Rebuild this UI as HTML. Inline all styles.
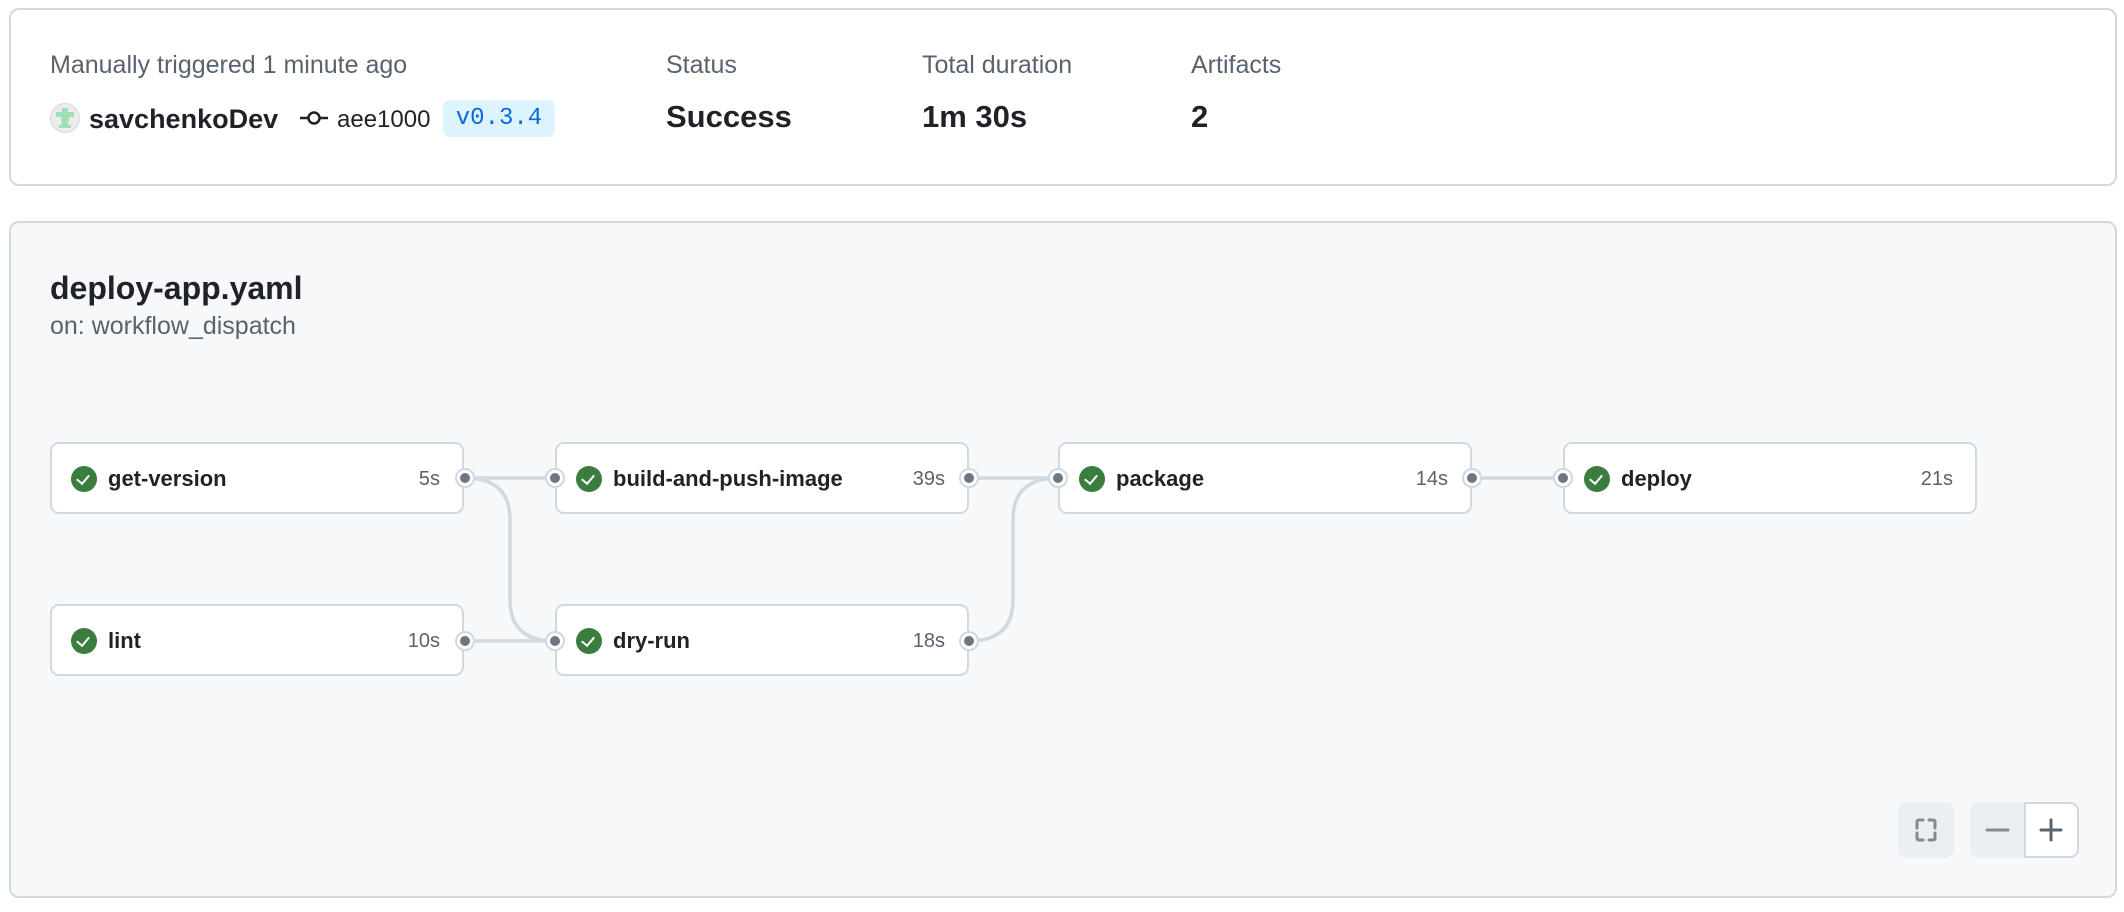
<!DOCTYPE html>
<html><head><meta charset="utf-8"><style>
*{box-sizing:border-box;margin:0;padding:0}
body{width:2124px;height:912px;background:#fff;font-family:"Liberation Sans",Arial,sans-serif;color:#1f2328;position:relative;overflow:hidden}
.abs{position:absolute}
.card1{left:9px;top:8px;width:2108px;height:178px;border:2px solid #d1d9e0;border-radius:10px;background:#fff}
.card2{left:9px;top:221px;width:2108px;height:677px;border:2px solid #d1d9e0;border-radius:10px;background:#f6f8fa}
.lbl{font-size:25px;color:#59636e;line-height:1}
.big{font-size:31px;font-weight:bold;line-height:1}
.node{position:absolute;width:414px;height:72px;background:#fff;border:2px solid #d1d9e0;border-radius:9px}
.node .ic{position:absolute;left:19px;top:22px;width:26px;height:26px;border-radius:50%;background:#3b7d3f}
.node .ic::after{content:"";position:absolute;left:8px;top:6px;width:6px;height:10px;border:solid #fff;border-width:0 2.5px 2.5px 0;transform:rotate(40deg)}
.node .nm{position:absolute;left:56px;top:22px;font-size:22px;font-weight:bold;line-height:26px;color:#1f2328}
.node .du{position:absolute;right:22px;top:24px;font-size:20px;color:#59636e;line-height:22px}
.port{position:absolute;width:20px;height:20px;border-radius:50%;background:#fff;border:2px solid #d1d9e0}
.port::after{content:"";position:absolute;left:3px;top:3px;width:10px;height:10px;border-radius:50%;background:#6e7781}
</style></head><body>
<div class="abs card1"></div>
<div class="abs lbl" style="left:50px;top:53px">Manually triggered 1 minute ago</div>
<div class="abs" style="left:50px;top:103px;width:30px;height:30px;border-radius:50%;background:#ececec;border:1px solid #d8d8d8">
<svg width="28" height="28" viewBox="0 0 28 28"><g fill="#9ee0b4"><rect x="11" y="4" width="6" height="4"/><rect x="5" y="8" width="18" height="5"/><rect x="10" y="13" width="8" height="4"/><rect x="11" y="17" width="6" height="4"/><rect x="8" y="21" width="12" height="3"/></g></svg></div>
<div class="abs" style="left:89px;top:103px;font-size:27px;font-weight:bold;line-height:32px">savchenkoDev</div>
<svg class="abs" style="left:299px;top:108px" width="30" height="20" viewBox="0 0 30 20"><line x1="1" y1="10" x2="9" y2="10" stroke="#1f2328" stroke-width="2.5"/><circle cx="15" cy="10" r="5.5" fill="none" stroke="#1f2328" stroke-width="2.5"/><line x1="21" y1="10" x2="29" y2="10" stroke="#1f2328" stroke-width="2.5"/></svg>
<div class="abs" style="left:337px;top:106px;font-size:24px;line-height:28px">aee1000</div>
<div class="abs" style="left:443px;top:100px;width:112px;height:37px;border-radius:7px;background:#ddf4ff;color:#0969da;font-family:'Liberation Mono',monospace;font-size:24px;line-height:37px;text-align:center">v0.3.4</div>
<div class="abs lbl" style="left:666px;top:53px">Status</div>
<div class="abs big" style="left:666px;top:101px">Success</div>
<div class="abs lbl" style="left:922px;top:53px">Total duration</div>
<div class="abs big" style="left:922px;top:101px">1m 30s</div>
<div class="abs lbl" style="left:1191px;top:53px">Artifacts</div>
<div class="abs big" style="left:1191px;top:101px">2</div>

<div class="abs card2"></div>
<div class="abs" style="left:50px;top:271px;font-size:32px;font-weight:bold;line-height:34px">deploy-app.yaml</div>
<div class="abs lbl" style="left:50px;top:314px">on: workflow_dispatch</div>

<svg class="abs" style="left:0;top:0" width="2124" height="912">
<g fill="none" stroke="#d1d9e0" stroke-width="3.5">
<path d="M465 478 H555"/>
<path d="M465 478 Q510 478 510 520 V600 Q510 641 555 641"/>
<path d="M465 641 H555"/>
<path d="M969 478 H1058"/>
<path d="M969 641 Q1013 641 1013 600 V520 Q1013 478 1058 478"/>
<path d="M1472 478 H1563"/>
</g></svg>

<div class="node" style="left:50px;top:442px"><div class="ic"></div><div class="nm">get-version</div><div class="du">5s</div></div>
<div class="node" style="left:555px;top:442px"><div class="ic"></div><div class="nm">build-and-push-image</div><div class="du">39s</div></div>
<div class="node" style="left:1058px;top:442px"><div class="ic"></div><div class="nm">package</div><div class="du">14s</div></div>
<div class="node" style="left:1563px;top:442px"><div class="ic"></div><div class="nm">deploy</div><div class="du">21s</div></div>
<div class="node" style="left:50px;top:604px"><div class="ic"></div><div class="nm">lint</div><div class="du">10s</div></div>
<div class="node" style="left:555px;top:604px"><div class="ic"></div><div class="nm">dry-run</div><div class="du">18s</div></div>

<div class="port" style="left:455px;top:468px"></div>
<div class="port" style="left:545px;top:468px"></div>
<div class="port" style="left:959px;top:468px"></div>
<div class="port" style="left:1048px;top:468px"></div>
<div class="port" style="left:1462px;top:468px"></div>
<div class="port" style="left:1553px;top:468px"></div>
<div class="port" style="left:455px;top:631px"></div>
<div class="port" style="left:545px;top:631px"></div>
<div class="port" style="left:959px;top:631px"></div>

<div class="abs" style="left:1898px;top:802px;width:56px;height:56px;border-radius:9px;background:#eceff2">
<svg width="56" height="56" viewBox="0 0 56 56" fill="none" stroke="#818b98" stroke-width="3" stroke-linecap="round"><path d="M19 26V20Q19 18 21 18H25M31 18H35Q37 18 37 20V26M37 31V36Q37 38 35 38H31M25 38H21Q19 38 19 36V31"/></svg></div>
<div class="abs" style="left:1970px;top:802px;width:109px;height:56px;border-radius:9px;background:#eceff2;border:2px solid #eceff2"></div>
<div class="abs" style="left:2024px;top:802px;width:55px;height:56px;border-radius:0 9px 9px 0;background:#fff;border:2px solid #d1d9e0"></div>
<svg class="abs" style="left:1970px;top:802px" width="109" height="56"><g stroke-linecap="round" stroke-width="3"><line x1="17" y1="28" x2="38" y2="28" stroke="#818b98"/><line x1="71" y1="28" x2="91" y2="28" stroke="#59636e"/><line x1="81" y1="18" x2="81" y2="38" stroke="#59636e"/></g></svg>
</body></html>
